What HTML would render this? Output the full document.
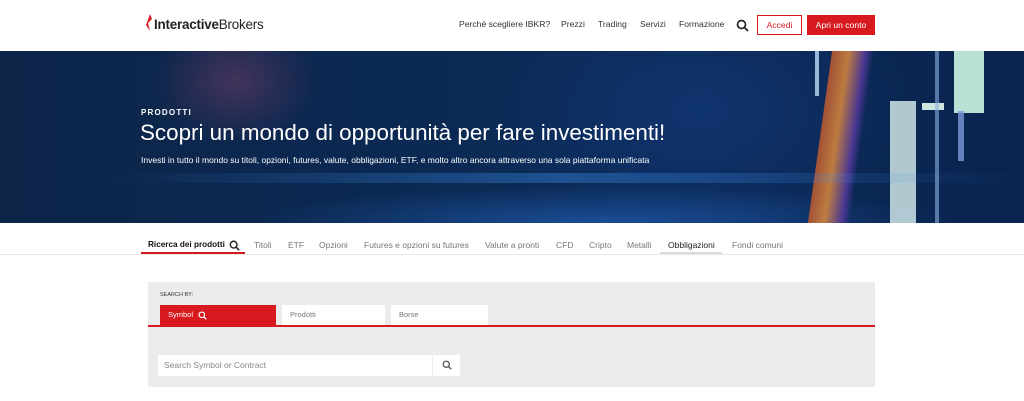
<!DOCTYPE html>
<html><head><meta charset="utf-8"><style>
*{margin:0;padding:0;box-sizing:border-box}
body{width:1024px;height:401px;overflow:hidden;background:#fff;font-family:"Liberation Sans",sans-serif;position:relative}
.a{position:absolute}
.nav span{position:absolute;top:19px;font-size:8.6px;color:#333}
.hero{left:0;top:51px;width:1024px;height:172px;overflow:hidden;
background:radial-gradient(ellipse 120px 90px at 235px 30px,rgba(150,70,110,.4),transparent 70%),
radial-gradient(ellipse 500px 50px at 600px 170px,rgba(40,110,210,.5),transparent 70%),
radial-gradient(ellipse 300px 200px at 700px 60px,rgba(20,60,130,.6),transparent 70%),
linear-gradient(90deg,#0c2448,#0b2a55 50%,#0a2450)}
.tabs span{position:absolute;top:240px;font-size:8.5px;color:#777}
.btn{display:flex;align-items:center;justify-content:center}
</style></head><body>
<div class="a" style="left:146px;top:14px;width:6px;height:16px;">
<svg width="8" height="18" viewBox="0 0 8 18"><path d="M4 0 L6 5 L2 9 L4 17 L0 11 Z" fill="#d71920"/></svg></div>
<div class="a" style="left:154px;top:17px;font-size:13.4px;color:#222;letter-spacing:-.2px"><b>Interactive</b>Brokers</div>
<div class="nav">
<span style="left:459px">Perché scegliere IBKR?</span>
<span style="left:561px">Prezzi</span>
<span style="left:598px">Trading</span>
<span style="left:640px">Servizi</span>
<span style="left:679px">Formazione</span>
</div>
<svg class="a" style="left:736px;top:19px" width="13" height="13" viewBox="0 0 13 13"><circle cx="5.5" cy="5.5" r="4" fill="none" stroke="#222" stroke-width="1.7"/><path d="M8.5 8.5L12 12" stroke="#222" stroke-width="1.8"/></svg>
<div class="a btn" style="left:757px;top:15px;width:45px;height:20px;border:1px solid #d71920;color:#d71920;font-size:8.6px">Accedi</div>
<div class="a btn" style="left:807px;top:15px;width:68px;height:20px;background:#d71920;color:#fff;font-size:8.6px">Apri un conto</div>
<div class="a hero">
<div class="a" style="left:820px;top:0;width:42px;height:172px;transform:skewX(-8deg);background:linear-gradient(90deg,#c85a2a,#e8903a 40%,#5a3aa0 80%,transparent);opacity:.8"></div>
<div class="a" style="left:815px;top:0;width:4px;height:45px;background:#9ab8d8"></div>
<div class="a" style="left:890px;top:50px;width:26px;height:122px;background:#cfe5e8;opacity:.85"></div>
<div class="a" style="left:922px;top:52px;width:22px;height:7px;background:#cfe5e0"></div>
<div class="a" style="left:935px;top:0;width:4px;height:172px;background:#8ab0e0;opacity:.6"></div>
<div class="a" style="left:954px;top:0;width:30px;height:62px;background:#b8e0d4"></div>
<div class="a" style="left:958px;top:60px;width:6px;height:50px;background:#7a98d8;opacity:.8"></div>
<div class="a" style="left:100px;top:122px;width:924px;height:10px;background:linear-gradient(90deg,transparent,rgba(60,140,230,.4),transparent)"></div>
</div>
<div class="a" style="left:141px;top:108px;font-size:8px;font-weight:bold;color:#fff;letter-spacing:1.2px">PRODOTTI</div>
<div class="a" style="left:140px;top:120px;font-size:22.4px;color:#fff">Scopri un mondo di opportunità per fare investimenti!</div>
<div class="a" style="left:141px;top:155px;font-size:8.5px;color:#fff">Investi in tutto il mondo su titoli, opzioni, futures, valute, obbligazioni, ETF, e molto altro ancora attraverso una sola piattaforma unificata</div>
<div class="tabs">
<span style="left:148px;color:#111;font-weight:bold;font-size:8.2px">Ricerca dei prodotti</span>
<span style="left:254px">Titoli</span><span style="left:288px">ETF</span><span style="left:319px">Opzioni</span>
<span style="left:364px">Futures e opzioni su futures</span><span style="left:485px">Valute a pronti</span>
<span style="left:556px">CFD</span><span style="left:589px">Cripto</span><span style="left:627px">Metalli</span>
<span style="left:668px;color:#222">Obbligazioni</span><span style="left:732px">Fondi comuni</span>
</div>
<svg class="a" style="left:229px;top:240px" width="11" height="11" viewBox="0 0 13 13"><circle cx="5.5" cy="5.5" r="4" fill="none" stroke="#222" stroke-width="1.7"/><path d="M8.5 8.5L12 12" stroke="#222" stroke-width="1.8"/></svg>
<div class="a" style="left:0;top:254px;width:1024px;height:1px;background:#e8e8e8"></div>
<div class="a" style="left:141px;top:252px;width:104px;height:2px;background:#d71920"></div>
<div class="a" style="left:660px;top:252px;width:62px;height:2px;background:#ddd"></div>
<div class="a" style="left:148px;top:282px;width:727px;height:105px;background:#ececec"></div>
<div class="a" style="left:160px;top:292px;font-size:5.5px;color:#333">SEARCH BY:</div>
<div class="a" style="left:160px;top:305px;width:116px;height:20px;background:#d71920;color:#fff;font-size:7.5px;line-height:20px;padding-left:8px">Symbol</div>
<svg class="a" style="left:198px;top:311px" width="9" height="9" viewBox="0 0 13 13"><circle cx="5.5" cy="5.5" r="4" fill="none" stroke="#fff" stroke-width="1.7"/><path d="M8.5 8.5L12 12" stroke="#fff" stroke-width="1.8"/></svg>
<div class="a" style="left:282px;top:305px;width:103px;height:20px;background:#fff;color:#777;font-size:7.5px;line-height:20px;padding-left:8px">Prodotti</div>
<div class="a" style="left:391px;top:305px;width:97px;height:20px;background:#fff;color:#777;font-size:7.5px;line-height:20px;padding-left:8px">Borse</div>
<div class="a" style="left:148px;top:325px;width:727px;height:1.5px;background:#d71920"></div>
<div class="a" style="left:158px;top:355px;width:274px;height:21px;background:#fff;color:#888;font-size:8.5px;line-height:21px;padding-left:6px">Search Symbol or Contract</div>
<div class="a" style="left:433px;top:355px;width:27px;height:21px;background:#fff"></div>
<svg class="a" style="left:442px;top:360px" width="10" height="10" viewBox="0 0 13 13"><circle cx="5.5" cy="5.5" r="4" fill="none" stroke="#444" stroke-width="1.5"/><path d="M8.5 8.5L12 12" stroke="#444" stroke-width="1.6"/></svg>
</body></html>
